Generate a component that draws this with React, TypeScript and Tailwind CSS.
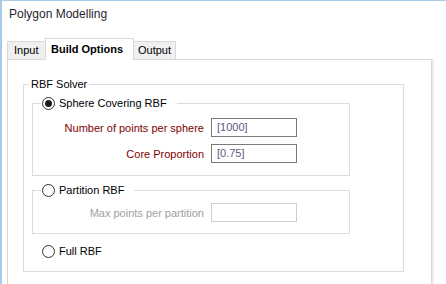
const Radio = ({ checked = false }: { checked?: boolean }) => (
  <span className="flex h-[13px] w-[13px] shrink-0 items-center justify-center rounded-full border border-[#333333] bg-white">
    {checked && <span className="h-[7px] w-[7px] rounded-full bg-[#1a1a1a]" />}
  </span>
);

const Field = ({
  label,
  value = "",
  disabled = false,
  className = "",
}: {
  label: string;
  value?: string;
  disabled?: boolean;
  className?: string;
}) => (
  <div className={`flex items-center ${className}`}>
    <div
      className={`w-[171px] text-right leading-[16px] ${disabled ? "text-[#a0a0a0]" : "text-[#800000]"}`}
    >
      {label}
    </div>
    <div
      className={`ml-[7px] h-[19px] w-[86px] pl-[5px] leading-[17px] text-[#5b5b7f] ${disabled ? "border border-[#cfcfcf]" : "border border-[#7a7a7a]"}`}
    >
      {value}
    </div>
  </div>
);

export default function App() {
  return (
    <div className="h-[284px] w-[446px] overflow-hidden border-t border-l-2 border-[#a9cbeb] bg-white font-['Liberation_Sans',Arial,sans-serif] text-[11px] text-black">
      {/* Title */}
      <div className="pt-[5px] pl-[7px] text-[12px] leading-[16px] text-[#1f1f2f]">
        Polygon Modelling
      </div>

      {/* Tabs */}
      <div className="mt-[16px] ml-[5px] flex h-[22px] items-end">
        <div className="flex h-[19px] w-[39px] items-center border border-[#d9d9d9] bg-[#f0f0f0] pl-[6px]">
          Input
        </div>
        <div className="relative z-10 -ml-px flex h-[22px] w-[89px] items-center border border-b-0 border-[#d9d9d9] bg-white pl-[5px] font-bold">
          Build Options
        </div>
        <div className="-ml-px flex h-[19px] w-[43px] items-center border border-[#d9d9d9] bg-[#f0f0f0] pl-[4px]">
          Output
        </div>
      </div>

      {/* Tab panel */}
      <div className="-mt-px ml-[5px] h-[240px] w-[425px] border border-[#d9d9d9] pt-[16px] shadow-[2px_0_0_#ececec]">
        <fieldset className="ml-[15px] w-[381px] border border-[#dcdcdc] pb-[12px]">
          <legend className="ml-[5px] px-[2px] leading-[16px]">RBF Solver</legend>

          {/* Sphere covering */}
          <fieldset className="mt-[3px] ml-[8px] w-[318px] border border-[#dcdcdc] pb-[12px]">
            <legend className="ml-[8px] flex items-center pr-[10px] pl-[1px] leading-[16px]">
              <Radio checked />
              <span className="ml-[4px]">Sphere Covering RBF</span>
            </legend>
            <Field className="mt-[7px]" label="Number of points per sphere" value="[1000]" />
            <Field className="mt-[7px]" label="Core Proportion" value="[0.75]" />
          </fieldset>

          {/* Partition */}
          <fieldset className="mt-[6px] ml-[8px] w-[318px] border border-[#dcdcdc] pb-[11px]">
            <legend className="ml-[8px] flex items-center pr-[10px] pl-[1px] leading-[16px]">
              <Radio />
              <span className="ml-[4px]">Partition RBF</span>
            </legend>
            <Field className="mt-[5px]" label="Max points per partition" disabled />
          </fieldset>

          {/* Full */}
          <div className="mt-[9px] ml-[18px] flex items-center leading-[16px]">
            <Radio />
            <span className="ml-[4px]">Full RBF</span>
          </div>
        </fieldset>
      </div>
    </div>
  );
}
